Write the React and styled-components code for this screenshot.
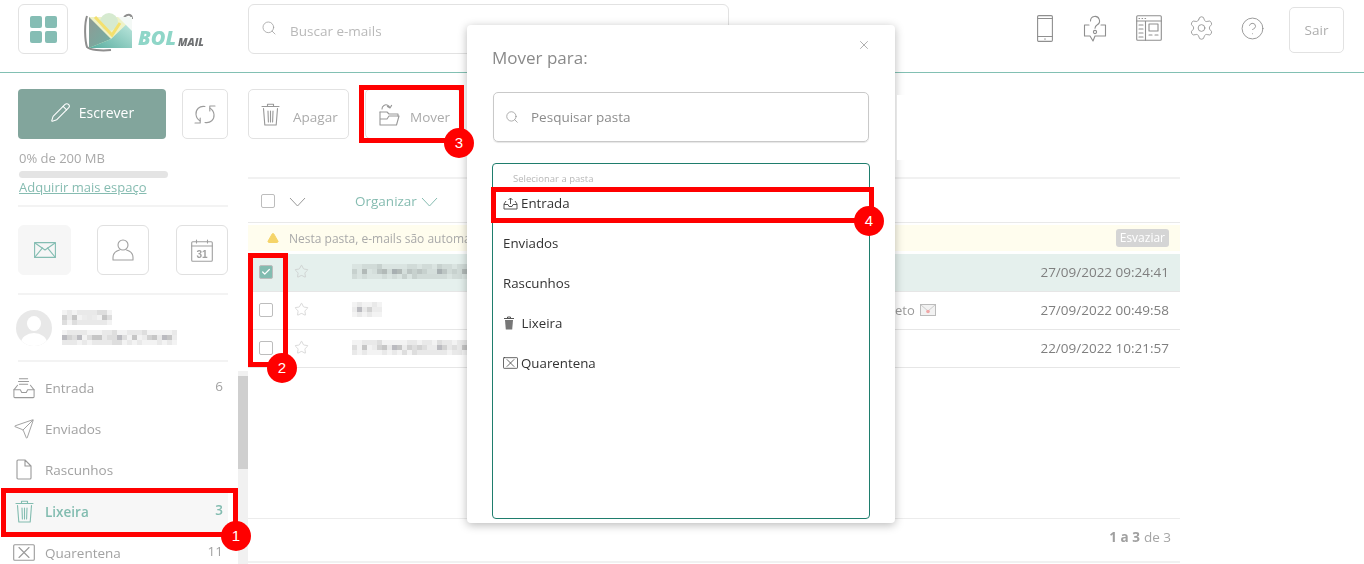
import React from "react";
import styled, { createGlobalStyle } from "styled-components";
import { Search, Settings, CircleHelp, Send, X, Star, Check, Pencil, TriangleAlert } from "lucide-react";

const FONT = `"Open Sans", "Noto Sans", "Liberation Sans", sans-serif`;

const Global = createGlobalStyle`
  html, body { margin: 0; padding: 0; background: #fff; }
  body { font-family: ${FONT}; color: #9c9c9c; }
  #root { width: 1364px; height: 564px; overflow: hidden; position: relative; }
  * { box-sizing: border-box; }
`;

const Page = styled.div`width:1364px;height:564px;display:flex;flex-direction:column;position:relative;overflow:hidden;`;
const Header = styled.header`height:73px;flex:none;border-bottom:1px solid #82c0b3;display:flex;align-items:flex-start;padding:4px 20px 0 18px;`;
const Tile = styled.button`width:50px;height:50px;border:1px solid #e2e2e2;border-radius:6px;background:#fff;padding:0;display:flex;align-items:center;justify-content:center;flex:none;`;
const GridIcon = styled.span`display:grid;grid-template-columns:12px 12px;grid-auto-rows:12px;gap:3px;`;
const GridCell = styled.i`background:#85bdb4;border-radius:2px;display:block;`;
const Logo = styled.div`width:122px;height:50px;margin-left:16px;position:relative;flex:none;`;
const LogoBol = styled.span`font:italic 800 20px/1 ${FONT};color:#8fd6c8;position:absolute;left:54px;top:24px;`;
const LogoMail = styled.span`font:italic 800 10.5px/1 ${FONT};color:#6f7173;position:absolute;left:94px;top:33px;`;
const SearchBox = styled.div`width:481px;height:50px;margin-left:42px;border:1px solid #e2e2e2;border-radius:6px;display:flex;align-items:center;padding:4px 0 0 12px;gap:13px;color:#9f9f9f;flex:none;svg{margin-top:-6px;}`;
const Placeholder = styled.span`font-size:13.5px;color:#b9b9b9;`;
const HeaderIcons = styled.div`margin-left:auto;display:flex;align-items:center;height:52px;`;
const HeaderIcon = styled.span`display:flex;width:${p => p.$w}px;margin-left:${p => p.$ml || 0}px;justify-content:center;color:#8f8f8f;margin-top:-4px;`;
const Sair = styled.button`width:55px;height:46px;margin-left:${p => p.$ml}px;border:1px solid #e2e2e2;border-radius:5px;background:#fff;font:13.5px ${FONT};color:#aeaeae;padding:0;`;

const Body = styled.div`flex:1;display:flex;min-height:0;`;
const Sidebar = styled.aside`width:238px;flex:none;padding:16px 10px 0 18px;overflow:hidden;`;
const ComposeRow = styled.div`display:flex;gap:16px;height:50px;`;
const Compose = styled.button`width:148px;border:0;border-radius:4px;background:#82a59c;color:#fff;font:14px ${FONT};display:flex;align-items:center;justify-content:center;gap:8px;padding:0 0 3px;`;
const Refresh = styled.button`width:46px;border:1px solid #e2e2e2;border-radius:5px;background:#fff;color:#9c9c9c;padding:0;display:flex;align-items:center;justify-content:center;`;
const Quota = styled.div`font-size:13px;line-height:18px;color:#a9a9a9;margin-top:10px;padding-left:1px;`;
const QuotaBar = styled.div`height:7px;width:149px;margin:4px 0 0 1px;border-radius:4px;background:#e4e4e4;`;
const MoreSpace = styled.a`display:block;font-size:13px;line-height:17px;margin:1px 0 0 1px;color:#86bcb1;text-decoration:underline;`;
const Rule = styled.div`height:2px;background:#f3f3f3;margin-top:${p => p.$mt}px;`;
const AppTabs = styled.div`display:flex;margin-top:18px;`;
const AppTab = styled.button`width:${p => p.$w}px;margin-left:${p => p.$ml || 0}px;height:50px;border-radius:6px;border:1px solid ${p => (p.$on ? "#f6f6f6" : "#e0e0e0")};background:${p => (p.$on ? "#f6f6f6" : "#fff")};display:flex;align-items:center;justify-content:center;padding:0;color:${p => (p.$on ? "#84bdb2" : "#a0a0a0")};`;
const Profile = styled.div`display:flex;align-items:flex-start;height:65px;margin:0 0 0 -2px;padding-top:15px;`;
const Avatar = styled.div`width:36px;height:36px;border-radius:50%;background:#e8e8e8;position:relative;overflow:hidden;flex:none;
  &::before{content:"";position:absolute;left:11px;top:6px;width:14px;height:15px;border-radius:50%;background:#fff;}
  &::after{content:"";position:absolute;left:5px;top:23px;width:26px;height:20px;border-radius:50%;background:#fff;}`;
const ProfileText = styled.div`display:flex;flex-direction:column;gap:5px;margin-left:10px;`;
const Nav = styled.nav`margin:0 0 0 -13px;padding-top:6px;`;
const NavRow = styled.div`height:41px;display:flex;align-items:center;padding:0 5px 0 8px;background:${p => (p.$on ? "#f7f7f7" : "transparent")};color:${p => (p.$on ? "#82bcb0" : "#a2a2a2")};font-size:13.5px;font-weight:${p => (p.$on ? 600 : 400)};
  &:nth-child(-n+3){padding-bottom:2px;}`;
const NavIcon = styled.span`width:22px;display:flex;justify-content:center;margin-right:10px;color:${p => (p.$on ? "#82bcb0" : "#9a9a9a")};`;
const NavCount = styled.span`margin-left:auto;margin-top:-4px;font-size:13.5px;`;

const Scroll = styled.div`width:10px;height:193px;align-self:flex-end;flex:none;background:#f1f1f1;padding-top:5px;`;
const Thumb = styled.div`height:93px;background:#cfcfcf;`;

const Main = styled.main`width:932px;flex:none;padding-top:16px;display:flex;flex-direction:column;`;
const Toolbar = styled.div`display:flex;height:50px;gap:16px;flex:none;`;
const ToolButton = styled.button`width:${p => p.$w}px;border:1px solid #e2e2e2;border-radius:5px;background:#fff;display:flex;align-items:center;padding:0 0 0 ${p => p.$pl}px;gap:${p => p.$gap}px;font:13.5px ${FONT};color:#ababab;svg{color:#989898;}`;
const ToolLabel = styled.span`margin-top:6px;`;
const List = styled.section`flex:1;margin-top:38px;border-top:2px solid #f1f1f1;display:flex;flex-direction:column;`;
const ListHead = styled.div`height:44px;flex:none;border-bottom:1px solid #e9e9e9;display:flex;align-items:center;padding-left:13px;color:#999;`;
const Chev = styled.svg`width:17px;height:10px;flex:none;margin:${p => p.$m};fill:none;stroke:currentColor;stroke-width:1;`;
const Box = styled.span`width:14px;height:14px;border:1px solid #bdbdbd;border-radius:2px;background:${p => (p.$on ? "#82bcb0" : "#fff")};display:flex;align-items:center;justify-content:center;color:#fff;flex:none;`;
const Organize = styled.span`color:#86bcb1;font-size:13.5px;margin-left:49px;display:flex;align-items:center;gap:4px;`;
const Notice = styled.div`height:26px;margin-top:2px;background:#fffdee;display:flex;align-items:center;padding:0 11px 0 19px;font-size:12px;color:#a9a9a9;flex:none;gap:10px;`;
const NoticeText = styled.span`white-space:nowrap;`;
const Empty = styled.span`margin-left:auto;background:#d5d5d5;color:#fff;font-size:12px;border-radius:3px;padding:0 4px;line-height:18px;`;
const Rows = styled.div`margin-top:3px;flex:none;`;
const Row = styled.div`height:38px;display:flex;align-items:center;padding:0 11px 2px 11px;border-bottom:1px solid #e6e6e6;background:${p => (p.$on ? "#e5f0ed" : "#fff")};`;
const RowStar = styled.span`display:flex;margin:0 0 0 21px;color:#c4c4c4;`;
const RowSender = styled.span`margin-left:43px;display:flex;`;
const RowDate = styled.span`margin-left:auto;font-size:13.5px;font-weight:500;color:#7f7f7f;`;
const Subject = styled.span`position:absolute;left:895px;top:${p => p.$t}px;font-size:13px;color:#9a9a9a;display:flex;align-items:center;gap:5px;`;
const Spacer = styled.div`flex:1;`;
const Footer = styled.div`height:45px;flex:none;border-top:1px solid #ececec;border-bottom:2px solid #f1f1f1;margin-bottom:1px;display:flex;align-items:center;justify-content:flex-end;padding:0 9px 6px 0;font-size:13.5px;color:#a5a5a5;b{font-weight:700;color:#a0a0a0;margin-right:4px;}`;

const Modal = styled.div`position:absolute;left:467px;top:25px;width:428px;height:498px;background:#fff;border-radius:4px;box-shadow:0 2px 10px rgba(0,0,0,.28);padding:0 25px;display:flex;flex-direction:column;`;
const ModalClose = styled.span`position:absolute;right:24px;top:13px;display:flex;color:#777;`;
const ModalTitle = styled.h2`margin:21px 0 0;font-size:17px;line-height:24px;font-weight:500;color:#8a8a8a;`;
const ModalSearch = styled.div`height:50px;margin:22px 1px 0;border:1px solid #c9c9c9;border-radius:5px;box-shadow:0 1px 1px rgba(0,0,0,.1);display:flex;align-items:center;padding-left:11px;gap:12px;font-size:13.5px;color:#8c8c8c;`;
const FolderBox = styled.div`height:356px;margin-top:21px;border:1px solid #1f7d6d;border-radius:4px;padding:0 10px;`;
const FolderHint = styled.div`font-size:9.5px;line-height:14px;color:#b8b8b8;padding:8px 0 0 10px;height:19px;`;
const FolderItem = styled.div`height:40px;display:flex;align-items:center;gap:3px;font-size:13.3px;color:#333;`;

const RedRect = styled.div`position:absolute;left:${p => p.$x}px;top:${p => p.$y}px;width:${p => p.$w}px;height:${p => p.$h}px;border:5px solid #ff0000;pointer-events:none;`;
const RedDot = styled.div`position:absolute;left:${p => p.$x - 15}px;top:${p => p.$y - 15}px;width:30px;height:30px;border-radius:50%;background:#ff0000;color:#fff;font:15px/30px "Liberation Sans",sans-serif;text-align:center;`;
const ShadowPatch = styled.div`position:absolute;left:897px;top:95px;width:8px;height:65px;background:#fff;`;
const MosaicSvg = styled.svg`display:block;filter:blur(.6px);mix-blend-mode:${p => (p.$tint ? "multiply" : "normal")};`;

const shades = ["#f3f3f3", "#e9e9e9", "#dedede", "#d2d2d2", "#c6c6c6", "#ececec", "#bbbbc0"];
function Mosaic({ cols, rows, seed = 7, cell = 5, tint }) {
  const rects = [];
  let s = seed;
  for (let r = 0; r < rows; r++) for (let c = 0; c < cols; c++) {
    s = (s * 73 + 41) % 101;
    const edge = r === 0 || r === rows - 1;
    const i = edge ? s % 2 + (s % 5 === 0 ? 1 : 0) : s % shades.length;
    rects.push(<rect key={r + "-" + c} x={c * cell} y={r * cell} width={cell} height={cell} fill={shades[i]} />);
  }
  return <MosaicSvg $tint={tint} width={cols * cell} height={rows * cell}>{rects}</MosaicSvg>;
}

const S = { fill: "none", stroke: "currentColor", strokeWidth: 1.1, strokeLinecap: "round", strokeLinejoin: "round" };

const LogoArt = () => (
  <svg width="54" height="42" viewBox="0 0 54 42" style={{ position: "absolute", left: 0, top: 9 }}>
    <defs>
      <linearGradient id="lg1" x1="0" y1="0" x2="1" y2="1"><stop offset="0" stopColor="#8f9a94" /><stop offset="1" stopColor="#6fb0a4" /></linearGradient>
      <linearGradient id="lg2" x1="0" y1="1" x2="1" y2="0"><stop offset="0" stopColor="#58ad9f" /><stop offset="1" stopColor="#c6ece3" /></linearGradient>
    </defs>
    <path d="M3 3C0 12 1 28 3 34c3 3 14 4 24 3" fill="none" stroke="#8f8f8f" strokeWidth="2" />
    <path d="M40 4c5-4 8-2 8 2" fill="none" stroke="#8f8f8f" strokeWidth="2" />
    <path d="M5 4h43v31H5z" fill="#eef2c8" />
    <circle cx="25" cy="9" r="9" fill="#d6ead0" />
    <path d="M5 4L27 26 5 35z" fill="url(#lg1)" />
    <path d="M48 6L27 26 5 35h43z" fill="url(#lg2)" />
    <path d="M11 4L28 22 36 10" fill="none" stroke="#f4e06e" strokeWidth="3" />
    <path d="M34 4h14v14z" fill="#f4f9f6" />
  </svg>
);
const InboxIcon = () => (
  <svg width="24" height="24" viewBox="0 0 24 24" {...S}>
    <path d="M7 2h9M6 5h11M7 8h9" />
    <path d="M5 9L1 14v7.5a1 1 0 0 0 1 1h20a1 1 0 0 0 1-1V14l-4-5" />
    <path d="M1 14h7l1.5 3h5l1.5-3h7" />
  </svg>
);
const TrashIcon = ({ w = 19, h = 23 }) => (
  <svg width={w} height={h} viewBox="0 0 19 23" {...S}>
    <path d="M1 3.5h17M6.5 3V1.2h6V3" />
    <path d="M2.5 5.5l1.3 16.5h11.4l1.3-16.5" />
    <path d="M7 8l.4 11M12 8l-.4 11M9.5 8v11" />
  </svg>
);
const MoveIcon = () => (
  <svg width="21" height="23" viewBox="0 0 21 23" {...S}>
    <path d="M3 6a4 4 0 0 1 6-3.6c1 .6 1.5 1.3 1.8 2.2M12.6 2.4L11 5 8.4 3.6" />
    <path d="M1 9h7l2 2h9v2" />
    <path d="M1 9v13h16.5L20 13H10l-2 3H1" />
  </svg>
);
const RefreshIcon = () => (
  <svg width="22" height="21" viewBox="0 0 22 21" {...S}>
    <path d="M11 2.5C5.5 1.5 1.5 5.5 2 10.5c.3 2.8 1.8 5 4 6.3" />
    <path d="M1 19h5.2v-5" />
    <path d="M11 18.5c5.5 1 9.5-3 9-8-.3-2.8-1.8-5-4-6.3" />
    <path d="M21 2h-5.2v5" />
  </svg>
);
const FileIcon = () => (
  <svg width="16" height="21" viewBox="0 0 16 21" {...S}><path d="M1 2a1 1 0 0 1 1-1h7l6 6v12a1 1 0 0 1-1 1H2a1 1 0 0 1-1-1zM9 1v6h6" /></svg>
);
const BoxX = ({ w = 22, h = 17 }) => (
  <svg width={w} height={h} viewBox="0 0 22 17" {...S}><rect x=".7" y=".7" width="20.6" height="15.6" rx="1" /><path d="M6 3.5l10 10M16 3.5l-10 10" /></svg>
);
const PhoneIcon = () => (
  <svg width="16" height="27" viewBox="0 0 16 27" {...S}>
    <rect x=".6" y=".6" width="14.8" height="25.8" rx="1.2" />
    <path d="M.6 3.5h14.8M.6 21.5h14.8M7.6 24h.8" />
  </svg>
);
const QuestionChat = () => (
  <svg width="24" height="27" viewBox="0 0 24 27" {...S}>
    <path d="M6 10H1.5v11H7l3 5 2-5h10.5V10H18" />
    <path d="M7.5 6a4.5 4.5 0 1 1 6.8 3.8c-1.4.9-2.3 1.7-2.3 3.4" />
    <circle cx="12" cy="17" r="1.6" />
  </svg>
);
const PanelIcon = () => (
  <svg width="26" height="26" viewBox="0 0 26 26" {...S}>
    <rect x=".7" y=".7" width="24.6" height="24.6" rx="1" />
    <path d="M.7 6h24.6M3 3.5h.6M6 3.5h.6M9 3.5h.6M9.5 6v19.3M3 10h4M3 14h4M3 18h4M3 22h4" />
    <rect x="13" y="9" width="9" height="7" />
    <path d="M13 20h3M19 20h3" />
  </svg>
);
const MailTab = () => (
  <svg width="22" height="16" viewBox="0 0 22 16" {...S}>
    <rect x=".6" y=".6" width="20.8" height="14.8" />
    <path d="M1 1l10 7 10-7M1 15l7.5-9.2M21 15l-7.5-9.2" />
  </svg>
);
const UserTab = () => (
  <svg width="22" height="22" viewBox="0 0 22 22" {...S}>
    <circle cx="11" cy="6" r="5" />
    <path d="M7.5 11C4 12 1 14.5 1 18.5V21h20v-2.5c0-4-3-6.5-6.5-7.5" />
  </svg>
);
const Calendar31 = () => (
  <svg width="22" height="23" viewBox="0 0 22 23" {...S}>
    <rect x=".7" y="2.7" width="20.6" height="19.6" rx="1" />
    <path d="M.7 7h20.6M5.5 1v3M16.5 1v3" />
    <text x="11" y="19" textAnchor="middle" fontSize="10" fontWeight="700" fill="currentColor" stroke="none" fontFamily="Liberation Sans">31</text>
  </svg>
);
const TrayUp = () => (
  <svg width="15" height="13" viewBox="0 0 15 13" fill="none" stroke="#555" strokeWidth="1"><path d="M3 4L1 7v5h13V7l-2-3M1 7.5h4l1 2h3l1-2h4M7.5 7V1M5.5 3l2-2 2 2" /></svg>
);
const SmallTrash = () => (
  <svg width="12" height="14" viewBox="0 0 12 14"><path d="M1 2.5h10M4.5 2.5V1h3v1.5" stroke="#555" fill="none" /><path d="M2 4h8l-.8 9.5H2.8z" fill="#777" /></svg>
);
const TinyMail = () => (
  <svg width="16" height="12" viewBox="0 0 16 12"><rect x=".5" y=".5" width="15" height="11" fill="#f2f2f2" stroke="#bbb" /><path d="M1 1l7 6 7-6" fill="none" stroke="#ccc" /><circle cx="8" cy="7.5" r="1.8" fill="#f0a7a7" /></svg>
);
const ChevDown = ({ m }) => (<Chev $m={m} viewBox="0 0 17 10"><path d="M1 1l7.5 8L16 1" /></Chev>);

const nav = [
  ["Entrada", <InboxIcon />, "6"],
  ["Enviados", <Send size={22} strokeWidth={1} />, ""],
  ["Rascunhos", <FileIcon />, ""],
  ["Lixeira", <TrashIcon />, "3", true],
  ["Quarentena", <BoxX />, "11"],
];

export default function App() {
  return (
    <Page>
      <Global />
      <Header>
        <Tile aria-label="Apps"><GridIcon><GridCell /><GridCell /><GridCell /><GridCell /></GridIcon></Tile>
        <Logo><LogoArt /><LogoBol>BOL</LogoBol><LogoMail>MAIL</LogoMail></Logo>
        <SearchBox><Search size={16} strokeWidth={1.2} /><Placeholder>Buscar e-mails</Placeholder></SearchBox>
        <HeaderIcons>
          <HeaderIcon $w={16}><PhoneIcon /></HeaderIcon>
          <HeaderIcon $w={24} $ml={30}><QuestionChat /></HeaderIcon>
          <HeaderIcon $w={26} $ml={29}><PanelIcon /></HeaderIcon>
          <HeaderIcon $w={27} $ml={26}><Settings size={32} strokeWidth={.75} /></HeaderIcon>
          <HeaderIcon $w={25} $ml={25}><CircleHelp size={29} strokeWidth={.85} /></HeaderIcon>
          <Sair $ml={24}>Sair</Sair>
        </HeaderIcons>
      </Header>
      <Body>
        <Sidebar>
          <ComposeRow>
            <Compose><Pencil size={21} strokeWidth={1.2} />Escrever</Compose>
            <Refresh aria-label="Atualizar"><RefreshIcon /></Refresh>
          </ComposeRow>
          <Quota>0% de 200 MB</Quota>
          <QuotaBar />
          <MoreSpace>Adquirir mais espaço</MoreSpace>
          <Rule $mt={9} />
          <AppTabs>
            <AppTab $w={53} $on><MailTab /></AppTab>
            <AppTab $w={52} $ml={26}><UserTab /></AppTab>
            <AppTab $w={52} $ml={27}><Calendar31 /></AppTab>
          </AppTabs>
          <Rule $mt={18} />
          <Profile>
            <Avatar />
            <ProfileText>
              <Mosaic cols={10} rows={3} cell={5} seed={3} />
              <Mosaic cols={23} rows={3} cell={5} seed={11} />
            </ProfileText>
          </Profile>
          <Rule $mt={0} />
          <Nav>
            {nav.map(([label, icon, count, on]) => (
              <NavRow key={label} $on={on}>
                <NavIcon $on={on}>{icon}</NavIcon>{label}<NavCount>{count}</NavCount>
              </NavRow>
            ))}
          </Nav>
        </Sidebar>
        <Scroll><Thumb /></Scroll>
        <Main>
          <Toolbar>
            <ToolButton $w={101} $pl={12} $gap={13}><TrashIcon /><ToolLabel>Apagar</ToolLabel></ToolButton>
            <ToolButton $w={96} $pl={13} $gap={10}><MoveIcon /><ToolLabel>Mover</ToolLabel></ToolButton>
          </Toolbar>
          <List>
            <ListHead>
              <Box />
              <ChevDown m="2px 0 0 14px" />
              <Organize>Organizar<ChevDown m="2px 0 0 0" /></Organize>
            </ListHead>
            <Notice><TriangleAlert size={12} fill="#f5d469" color="#f5d469" /><NoticeText>Nesta pasta, e-mails são automa</NoticeText><Empty>Esvaziar</Empty></Notice>
            <Rows>
              <Row $on><Box $on><Check size={10} strokeWidth={3} /></Box><RowStar><Star size={15} strokeWidth={1} /></RowStar><RowSender><Mosaic cols={24} rows={3} seed={5} cell={5} tint /></RowSender><RowDate>27/09/2022 09:24:41</RowDate></Row>
              <Row><Box /><RowStar><Star size={15} strokeWidth={1} /></RowStar><RowSender><Mosaic cols={6} rows={3} seed={9} cell={5} /></RowSender><RowDate>27/09/2022 00:49:58</RowDate></Row>
              <Row><Box /><RowStar><Star size={15} strokeWidth={1} /></RowStar><RowSender><Mosaic cols={24} rows={3} seed={5} cell={5} /></RowSender><RowDate>22/09/2022 10:21:57</RowDate></Row>
            </Rows>
            <Spacer />
            <Footer><b>1 a 3</b>de 3</Footer>
          </List>
        </Main>
      </Body>
      <Subject $t={301}>eto<TinyMail /></Subject>
      <Modal>
        <ModalClose><X size={14} strokeWidth={1} /></ModalClose>
        <ModalTitle>Mover para:</ModalTitle>
        <ModalSearch><Search size={14} strokeWidth={1.2} />Pesquisar pasta</ModalSearch>
        <FolderBox>
          <FolderHint>Selecionar a pasta</FolderHint>
          <FolderItem><TrayUp />Entrada</FolderItem>
          <FolderItem>Enviados</FolderItem>
          <FolderItem>Rascunhos</FolderItem>
          <FolderItem><SmallTrash />&nbsp;Lixeira</FolderItem>
          <FolderItem><BoxX w={15} h={12} />Quarentena</FolderItem>
        </FolderBox>
      </Modal>
      <ShadowPatch />
      <RedRect $x={1} $y={488} $w={237} $h={49} />
      <RedRect $x={248} $y={253} $w={40} $h={114} />
      <RedRect $x={359} $y={85} $w={105} $h={58} />
      <RedRect $x={491} $y={187} $w={383} $h={36} />
      <RedDot $x={236} $y={536}>1</RedDot>
      <RedDot $x={282} $y={368}>2</RedDot>
      <RedDot $x={459} $y={143}>3</RedDot>
      <RedDot $x={869} $y={221}>4</RedDot>
    </Page>
  );
}
